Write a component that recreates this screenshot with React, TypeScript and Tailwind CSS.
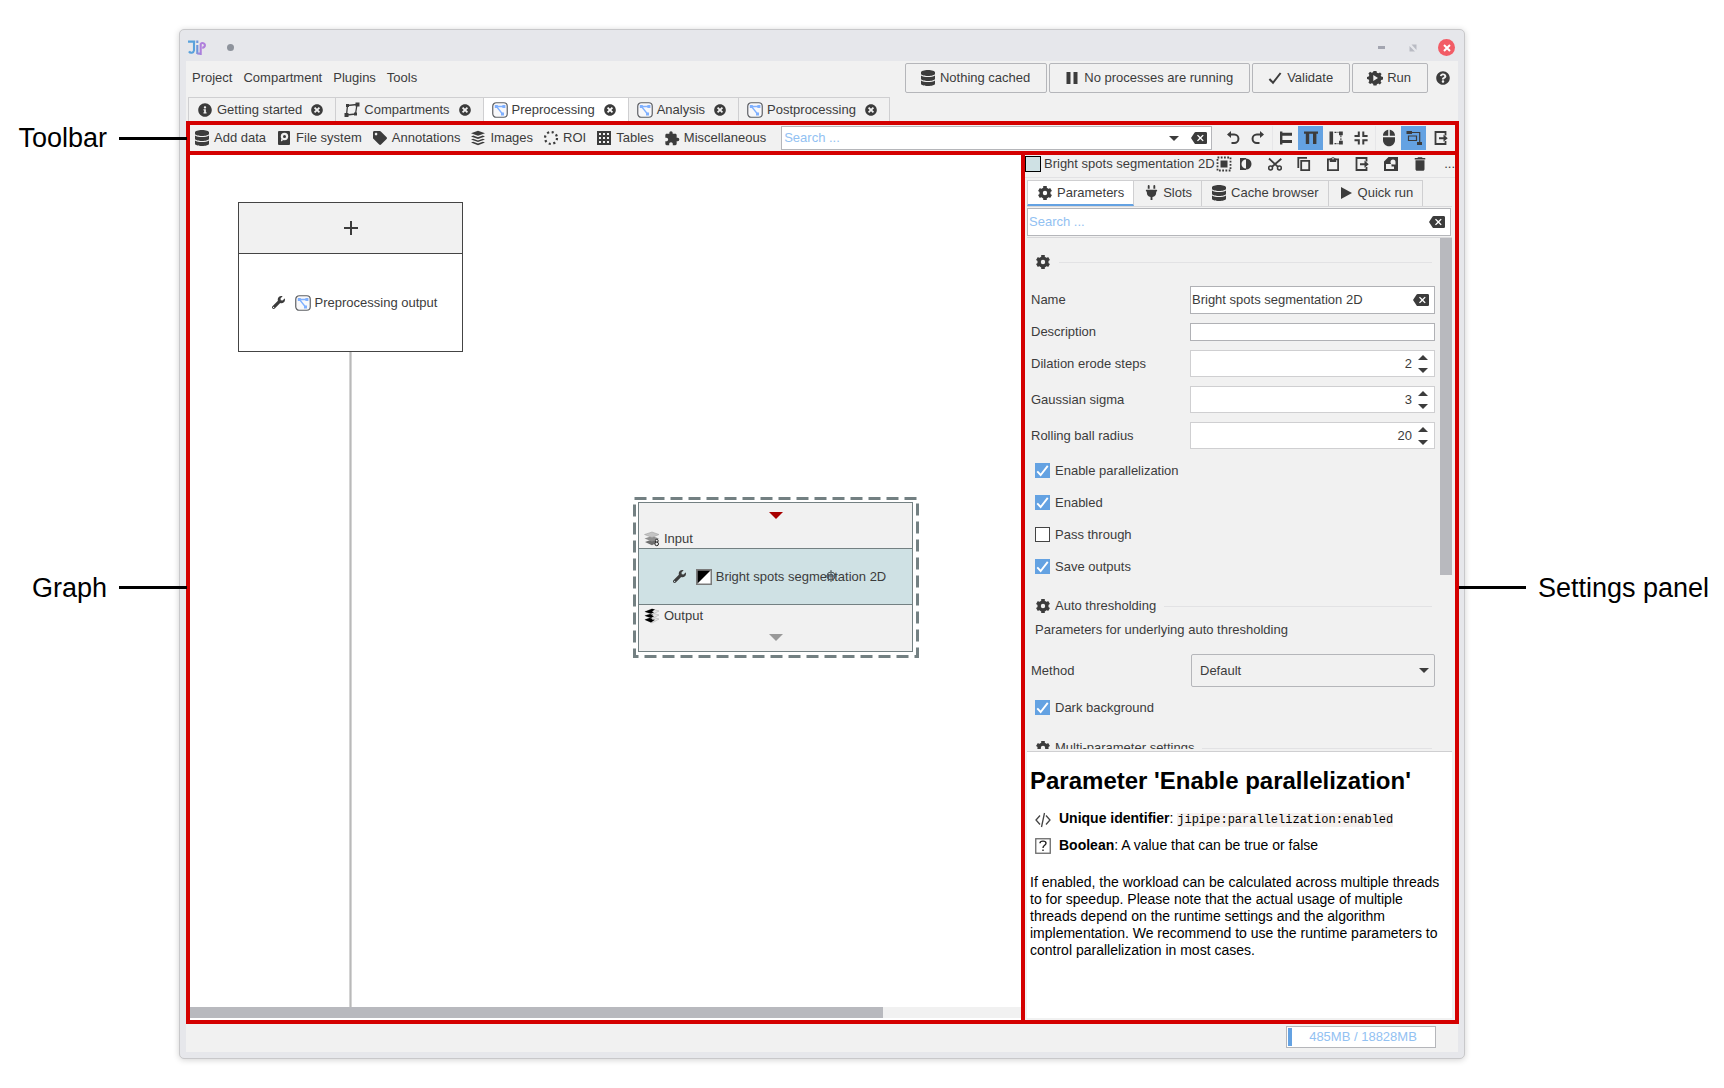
import React from "react";
import {
  FaDatabase,
  FaInfoCircle,
  FaPlug,
  FaQuestionCircle,
  FaTag,
  FaTimesCircle,
  FaWrench,
} from "react-icons/fa";
import { MdBackspace, MdDelete, MdExtension, MdMouse } from "react-icons/md";

type IconProps = { className?: string };

function Svg({ children, className = "size-4" }: { children: React.ReactNode; className?: string }) {
  return (
    <svg viewBox="0 0 16 16" className={`${className} shrink-0`} fill="currentColor" aria-hidden="true">
      {children}
    </svg>
  );
}

/* ---------- icons ---------- */

const Logo = () => (
  <svg viewBox="0 0 18 15" className="h-[15px] w-[18px]" fill="none" strokeWidth="2.1" aria-hidden="true">
    <path d="M0 1.6H7.2M6 1.6V10.4a2.7 2.7 0 0 1-5 1" stroke="#5aa2dc" />
    <path d="M9.3 5V14M9.3 0.5v2.6" stroke="#6f96dc" />
    <path d="M12.7 15V4a2.3 2.3 0 1 1 2.3 3.6H14.2" stroke="#b07fdc" />
    <path d="M9.3 13.6h3.4" stroke="#9a8adc" />
  </svg>
);

const CompartmentIcon = () => (
  <Svg>
    <rect x="0.75" y="0.75" width="14.5" height="14.5" rx="3.5" fill="#f8f8fa" stroke="#5e6064" strokeWidth="1.2" />
    <path d="M4 4.5h8M4.5 4.5l6 7.5" stroke="#7fb0ff" strokeWidth="1.3" />
    <rect x="2.8" y="3" width="3" height="3" fill="#7fb0ff" />
    <rect x="10.4" y="3" width="3" height="3" fill="#7fb0ff" />
    <rect x="9" y="10.5" width="3" height="3" fill="#7fb0ff" />
  </Svg>
);

const GraphIcon = () => (
  <Svg>
    <path d="M3.5 3.5L13 2.5M3.5 3.5L2.5 13M13 2.5L11.5 12M2.5 13l9-1" stroke="currentColor" strokeWidth="1.3" fill="none" />
    <path d="M2 2h3v3H2zM11.5 0.5H15.5V4.5H11.5zM0.5 11H4.5V15H0.5zM10 10.5h3v3h-3z" />
  </Svg>
);

const DriveIcon = () => (
  <Svg>
    <rect x="2" y="1" width="12" height="14" rx="1" />
    <circle cx="8.5" cy="6.5" r="3.7" fill="#f1f1f1" />
    <path d="M5 9v2.5L7.500 10z" fill="#f1f1f1" />
    <circle cx="8.5" cy="6.5" r="1.5" />
  </Svg>
);

const LayersIcon = () => (
  <Svg>
    <path d="M8 0.8l7 2.5-7 2.5-7-2.5z" />
    <path d="M1 6.4l2.200-.8L8 7.300l4.800-1.700 2.200.8-7 2.600z" />
    <path d="M1 9.500l2.200-.8L8 10.400l4.800-1.700 2.200.8-7 2.600z" />
    <path d="M1 12.600l2.200-.8L8 13.500l4.800-1.700 2.200.8-7 2.600z" />
  </Svg>
);

const RoiIcon = () => (
  <Svg>
    <circle cx="8" cy="8" r="6" fill="none" stroke="currentColor" strokeWidth="2.2" strokeDasharray="2.1 2.61" />
  </Svg>
);

const TableIcon = () => (
  <Svg>
    <path fillRule="evenodd" d="M1 1h14v14H1zM3 3v2h2V3zM7 3v2h2V3zM11 3v2h2V3zM3 7v2h2V7zM7 7v2h2V7zM11 7v2h2V7zM3 11v2h2v-2zM7 11v2h2v-2zM11 11v2h2v-2z" />
  </Svg>
);

const UndoIcon = () => (
  <Svg>
    <path d="M5 4.5h4.2a4.1 4.1 0 0 1 0 8.500H6.500" stroke="currentColor" strokeWidth="2" fill="none" />
    <path d="M6 1v7L2 4.500z" />
  </Svg>
);

const RedoIcon = () => (
  <Svg>
    <path d="M11 4.500H6.800a4.100 4.100 0 0 0 0 8.500H9.500" stroke="currentColor" strokeWidth="2" fill="none" />
    <path d="M10 1v7l4-3.500z" />
  </Svg>
);

const AlignLeftIcon = () => (
  <Svg>
    <path d="M2 1.500h2.400v1.300H14v3H4.400v4.100H14v3H4.400v1.600H2z" />
  </Svg>
);

const AlignTopIcon = () => (
  <Svg>
    <path d="M1 1.500h14v2.300h-1.600V14H10V3.800H6.200V14H2.800V3.800H1z" />
  </Svg>
);

const AutoLayoutIcon = () => (
  <Svg>
    <path d="M1.500 1.500h3.600v13H1.500zM11 1.500h3.800v3.800H11zM11 10.700h3.800v3.800H11z" />
    <path d="M6.500 2.400h4M6.500 13.600h4M12.900 5.300v5.400" stroke="currentColor" strokeWidth="1.1" strokeDasharray="2 1" fill="none" />
  </Svg>
);

const CenterViewIcon = () => (
  <Svg>
    <path d="M4.800 1.500h2V7H1.500V5h3.300zM9.300 1.500h2V5h3.300v2H9.300zM1.500 9.200h5.300v5.400h-2v-3.400H1.500zM9.300 9.200h5.300v2h-3.300v3.400h-2z" />
  </Svg>
);

const EdgeLayoutIcon = () => (
  <Svg>
    <path d="M5 2.500h8.700v10.500M2.500 6h8v4.500h-8z" stroke="currentColor" strokeWidth="1.2" fill="none" />
    <path d="M0.500 1H6v3H0.500zM11 12h5v3h-5z" />
  </Svg>
);

const ExportIcon = () => (
  <Svg>
    <path d="M12.500 5.500V2h-10v12h10V11" stroke="currentColor" strokeWidth="1.800" fill="none" />
    <path d="M6 7.200h4.500V4.600l4.200 3.600-4.200 3.600V9.200H6z" />
  </Svg>
);

const PauseIcon = () => (
  <Svg>
    <path d="M2.500 2h4v12h-4zM9.500 2h4v12h-4z" />
  </Svg>
);

const PlayIcon = () => (
  <Svg>
    <path d="M3 2l11 6-11 6z" />
  </Svg>
);

const TickIcon = ({ className = "size-4" }: IconProps) => (
  <Svg className={className}>
    <path d="M2.400 9l3.600 3.800L13.600 3" stroke="currentColor" strokeWidth="2" fill="none" />
  </Svg>
);

const GearIcon = () => (
  <Svg>
    <circle cx="8" cy="8" r="3.900" fill="none" stroke="currentColor" strokeWidth="3.400" />
    <path
      d="M8 1v3M8 12v3M1.940 4.500l2.600 1.500M11.460 10l2.600 1.500M1.940 11.500l2.600-1.500M11.460 6l2.600-1.500"
      stroke="currentColor"
      strokeWidth="3.600"
      fill="none"
    />
  </Svg>
);

const RunIcon = () => (
  <Svg>
    <path
      fillRule="evenodd"
      d="M6.500 1h3l.4 1.700 1.500.6 1.600-.9L14.600 4l-.9 1.600.5 1L16 7v2.400l-1.800.5-.6 1.400.9 1.500-1.700 1.700-1.500-.9-1.400.6L9.500 15.500h-3L6 13.800l-1.400-.6-1.500.9-1.700-1.700.9-1.500L1.700 9.500 0 9V7l1.700-.5.6-1.400L1.400 3.500 3.100 1.800l1.500.9L6 2.200zM6.300 5v6L11 8z"
    />
  </Svg>
);

const SelectAllIcon = () => (
  <Svg>
    <rect x="1.500" y="1.500" width="13" height="13" fill="none" stroke="currentColor" strokeWidth="1.800" strokeDasharray="1.800 1.450" />
    <rect x="4.500" y="4.500" width="7" height="7" />
  </Svg>
);

const InvertIcon = () => (
  <Svg>
    <path d="M2 2h6v1.500a4.500 4.500 0 0 0 0 9V14H2z" />
    <path d="M8 2.500a5.500 5.500 0 0 1 0 11z" />
  </Svg>
);

const CutIcon = () => (
  <Svg>
    <path d="M2 2.500l9 8.300M14.300 2.800L5 10.800" stroke="currentColor" strokeWidth="1.800" fill="none" />
    <circle cx="3.600" cy="12" r="1.900" fill="none" stroke="currentColor" strokeWidth="1.500" />
    <circle cx="12.400" cy="12" r="1.900" fill="none" stroke="currentColor" strokeWidth="1.500" />
  </Svg>
);

const CopyIcon = () => (
  <Svg>
    <path d="M2.300 12V1.900H11M5.200 4.900h8v9.200h-8z" stroke="currentColor" strokeWidth="1.800" fill="none" />
  </Svg>
);

const PasteIcon = () => (
  <Svg>
    <path d="M2.900 3.400h10.200v10.700H2.900z" stroke="currentColor" strokeWidth="1.800" fill="none" />
    <path d="M4.800 2.500h1.400a1.900 1.900 0 0 1 3.600 0h1.400V6H4.800z" />
    <circle cx="8" cy="2.800" r="0.800" fill="#f1f1f1" />
  </Svg>
);

const TemplateIcon = () => (
  <Svg>
    <path fillRule="evenodd" d="M5.500 1H15v14H1V5.500zM3 8v5h8v-2.500H8.500V8zM10 3.500a2.500 2.500 0 1 0 0 5h2.500V6A2.500 2.500 0 0 0 10 3.500z" />
  </Svg>
);

const CodeIcon = () => (
  <Svg>
    <path d="M5 3.500L1 8l4 4.500M11 3.500L15 8l-4 4.500M9.500 1l-3 14" stroke="#444" strokeWidth="1.300" fill="none" />
  </Svg>
);

const UnknownTypeIcon = () => (
  <Svg>
    <rect x="0.750" y="0.750" width="14.500" height="14.500" fill="none" stroke="#6a6a6a" strokeWidth="1.300" />
    <path d="M5 5.300C5 2.400 11 2.400 11 5.300 11 7.400 8 7.300 8 10M8 11.500v1.600" stroke="#222" strokeWidth="1.400" fill="none" />
  </Svg>
);

const GreyscaleStackIcon = () => (
  <Svg>
    <path d="M1 11l7-2.500 6 2.500-6 3.200z" fill="#6f6f6f" />
    <path d="M0.500 7.500L8 5l7 2.500-7 3z" fill="#8f8f8f" />
    <path d="M0.500 3.500L8 1l7 2.500-7 3z" fill="#c4c4c4" stroke="#9a9a9a" strokeWidth="0.500" />
    <circle cx="12.700" cy="9.800" r="1.500" fill="#eee" stroke="#222" strokeWidth="1" />
    <circle cx="12.700" cy="12.900" r="1.800" fill="#eee" stroke="#222" strokeWidth="1" />
  </Svg>
);

const MaskStackIcon = () => (
  <Svg>
    <path d="M1 11.500L8 9l7 2-7 4z" fill="#e4e4e4" stroke="#aaa" strokeWidth="0.500" />
    <path d="M0.500 11.800L8 9v2.500l3 .3L7 14.500z" fill="#000" />
    <path d="M1 7.500L8 5l7 2-7 3.500z" fill="#e4e4e4" stroke="#aaa" strokeWidth="0.500" />
    <path d="M0.500 7.800L10 4.800 8 7.200l2 1L7 10z" fill="#000" />
    <path d="M1 3.500L8 1l7 2-7 3.500z" fill="#e4e4e4" stroke="#aaa" strokeWidth="0.500" />
    <path d="M0.500 3.700L8 0.800l3 .6-3 2 2 .8L7 5.800z" fill="#000" />
  </Svg>
);

const ThresholdIcon = () => (
  <Svg>
    <rect x="0.750" y="0.750" width="14.500" height="14.500" fill="#fff" stroke="#7a7a7a" strokeWidth="1.500" />
    <path d="M1.500 1.500h13l-13 13z" fill="#000" />
  </Svg>
);

const CrosshairIcon = () => (
  <svg viewBox="0 0 12 12" className="size-3" fill="none" stroke="#4a5558" aria-hidden="true">
    <circle cx="6" cy="6" r="4" />
    <path d="M6 0v12M0 6h12" />
  </svg>
);

const CaretDown = ({ className }: IconProps) => (
  <svg viewBox="0 0 10 5" preserveAspectRatio="none" className={className} fill="currentColor" aria-hidden="true">
    <path d="M0 0h10L5 5z" />
  </svg>
);

const CaretUp = ({ className }: IconProps) => (
  <svg viewBox="0 0 10 5" preserveAspectRatio="none" className={className} fill="currentColor" aria-hidden="true">
    <path d="M0 5h10L5 0z" />
  </svg>
);

const Wrench = () => <FaWrench className="size-[13px] shrink-0" />;

/* ---------- window chrome ---------- */

function TitleBar() {
  return (
    <header className="flex h-[31px] shrink-0 items-center pt-1 pr-[3px] pl-0.5">
      <Logo />
      <span className="ml-[21px] size-[7px] rounded-full bg-[#8e939c]" />
      <div className="ml-auto flex items-center">
        <button aria-label="Minimize" className="flex size-4 items-center justify-center">
          <span className="h-[3px] w-[7px] bg-[#a3a5b0]" />
        </button>
        <button aria-label="Maximize" className="ml-4 flex size-4 items-center justify-center text-[#b9bbc3]">
          <svg viewBox="0 0 8 8" className="size-2" fill="currentColor" aria-hidden="true">
            <path d="M2.500 0.500h5V6zM0.500 2v5.500H6z" />
          </svg>
        </button>
        <button aria-label="Close" className="ml-[17px] flex size-[17px] items-center justify-center rounded-full bg-[#f25c66] text-white">
          <svg viewBox="0 0 8 8" className="size-2" stroke="currentColor" strokeWidth="2" aria-hidden="true">
            <path d="M1 1l6 6M7 1L1 7" />
          </svg>
        </button>
      </div>
    </header>
  );
}

function ActionButton({ icon, children }: { icon: React.ReactNode; children: React.ReactNode }) {
  return (
    <button className="flex h-[30px] items-center gap-1 rounded-[2px] border border-[#b5b6ba] pr-4 pl-3.5">
      {icon}
      {children}
    </button>
  );
}

function MenuBar() {
  return (
    <div className="flex h-[36px] shrink-0 items-start justify-between pt-0.5 pr-2 pl-1.5">
      <nav className="flex h-[30px] items-center gap-[11px]">
        <button>Project</button>
        <button>Compartment</button>
        <button>Plugins</button>
        <button>Tools</button>
      </nav>
      <div className="flex items-center gap-0.5">
        <ActionButton icon={<FaDatabase className="size-4" />}>Nothing cached</ActionButton>
        <ActionButton icon={<PauseIcon />}>No processes are running</ActionButton>
        <ActionButton icon={<TickIcon />}>Validate</ActionButton>
        <ActionButton icon={<RunIcon />}>Run</ActionButton>
        <button aria-label="Help" className="ml-1.5">
          <FaQuestionCircle className="size-[14px]" />
        </button>
      </div>
    </div>
  );
}

const documentTabs = [
  { label: "Getting started", icon: <FaInfoCircle className="size-[14px]" /> },
  { label: "Compartments", icon: <GraphIcon /> },
  { label: "Preprocessing", icon: <CompartmentIcon />, active: true },
  { label: "Analysis", icon: <CompartmentIcon /> },
  { label: "Postprocessing", icon: <CompartmentIcon /> },
];

function DocumentTabs() {
  return (
    <div className="flex h-6 shrink-0 pl-0.5">
      {documentTabs.map((tab, i) => (
        <div
          key={tab.label}
          className={`flex items-center border-t border-r border-[#cfcfd1] pr-3 pl-2 ${i === 0 ? "border-l" : ""} ${
            tab.active ? "bg-white" : ""
          }`}
        >
          <button className="flex items-center gap-1">
            <span className="flex w-4 justify-center">{tab.icon}</span>
            {tab.label}
          </button>
          <button aria-label={`Close ${tab.label}`} className="ml-[9px]">
            <FaTimesCircle className="size-3" />
          </button>
        </div>
      ))}
    </div>
  );
}

/* ---------- toolbar ---------- */

const toolbarMenus = [
  { label: "Add data", icon: <FaDatabase className="size-4" /> },
  { label: "File system", icon: <DriveIcon /> },
  { label: "Annotations", icon: <FaTag className="size-[14px]" /> },
  { label: "Images", icon: <LayersIcon /> },
  { label: "ROI", icon: <RoiIcon /> },
  { label: "Tables", icon: <TableIcon /> },
  { label: "Miscellaneous", icon: <MdExtension className="size-[17px]" /> },
];

const toolGroups = [
  [
    { label: "Undo", icon: <UndoIcon /> },
    { label: "Redo", icon: <RedoIcon /> },
  ],
  [
    { label: "Horizontal layout", icon: <AlignLeftIcon /> },
    { label: "Vertical layout", icon: <AlignTopIcon />, active: true },
    { label: "Auto layout", icon: <AutoLayoutIcon /> },
    { label: "Center view", icon: <CenterViewIcon /> },
  ],
  [
    { label: "Mouse help", icon: <MdMouse className="size-[18px]" /> },
    { label: "Draw edges", icon: <EdgeLayoutIcon />, active: true },
  ],
  [{ label: "Export", icon: <ExportIcon /> }],
];

function Toolbar() {
  return (
    <div className="flex h-[34px] shrink-0 items-center border-4 border-[#d40000] bg-[#f1f1f1] pr-0.5 pl-1">
      <div className="flex items-center gap-2.5">
        {toolbarMenus.map((m) => (
          <button key={m.label} className="flex items-center gap-1">
            <span className="flex w-4 justify-center">{m.icon}</span>
            {m.label}
          </button>
        ))}
      </div>
      <div className="ml-[15px] flex h-6 min-w-0 flex-1 items-center border border-[#b5b6ba] bg-white pr-1 pl-0.5">
        <input
          aria-label="Search nodes"
          placeholder="Search ..."
          className="min-w-0 flex-1 bg-transparent outline-none placeholder:text-[#92c1f2]"
        />
        <button aria-label="Show suggestions" className="px-3">
          <CaretDown className="h-[5px] w-[10px]" />
        </button>
        <button aria-label="Clear search">
          <MdBackspace className="size-4" />
        </button>
      </div>
      <div className="ml-2 flex gap-0.5">
        {toolGroups.map((group, g) => (
          <div key={g} className={`flex ${g === 1 || g === 2 ? "border-l border-[#e6e6e8]" : ""}`}>
            {group.map((t) => (
              <button
                key={t.label}
                aria-label={t.label}
                className={`flex h-6 w-[25px] items-center justify-center ${"active" in t && t.active ? "bg-[#64a2e2]" : ""}`}
              >
                {t.icon}
              </button>
            ))}
          </div>
        ))}
      </div>
    </div>
  );
}

/* ---------- graph ---------- */

function GraphCanvas() {
  return (
    <main className="flex min-w-0 flex-1 flex-col border-b-4 border-l-4 border-[#d40000] bg-white">
      <div className="relative flex-1 overflow-hidden">
        <div className="absolute top-[197px] bottom-0 left-[159px] w-[3px] border-x border-[#d4d4d4] bg-[#b9b9b9]" />

        <section className="absolute top-[47px] left-[48px] flex h-[150px] w-[225px] flex-col border border-[#444] bg-white">
          <button aria-label="Add slot" className="flex h-[51px] items-center justify-center border-b border-[#444] bg-[#f1f1f1]">
            <svg viewBox="0 0 14 14" className="size-[14px]" stroke="currentColor" strokeWidth="2" aria-hidden="true">
              <path d="M7 0v14M0 7h14" />
            </svg>
          </button>
          <div className="flex flex-1 items-center justify-center gap-1 pl-2">
            <Wrench />
            <span className="ml-1.5">
              <CompartmentIcon />
            </span>
            Preprocessing output
          </div>
        </section>

        <section className="absolute top-[342px] left-[443px] h-[161px] w-[286px] p-[5px]">
          <svg className="absolute inset-0 size-full" fill="none" aria-hidden="true">
            <rect x="1.5" y="1.5" width="283" height="158" stroke="#738082" strokeWidth="3" strokeDasharray="12 6" />
          </svg>
          <div className="relative flex h-[150px] w-[275px] flex-col border border-[#738082] bg-[#f1f1f1]">
            <div className="flex h-[45px] flex-col justify-between pb-px">
              <CaretDown className="mx-auto mt-[9px] h-[7px] w-[14px] text-[#a80000]" />
              <div className="flex items-center gap-1 pl-[5px]">
                <GreyscaleStackIcon />
                Input
              </div>
            </div>
            <div className="relative flex h-[57px] items-center justify-center gap-1 border-y border-[#738082] bg-[#cfe1e4] pl-2">
              <Wrench />
              <span className="ml-1.5">
                <ThresholdIcon />
              </span>
              Bright spots segmentation 2D
              <span className="absolute top-[21px] left-[186px]">
                <CrosshairIcon />
              </span>
            </div>
            <div className="flex items-center gap-1 pt-[3px] pl-[5px]">
              <MaskStackIcon />
              Output
            </div>
            <CaretDown className="mx-auto mt-2.5 h-[7px] w-[14px] text-[#999]" />
          </div>
        </section>
      </div>
      <div className="mb-0.5 flex h-[11px] shrink-0 bg-[#f1f1f1]">
        <div className="w-5/6 bg-[#b8b9be]" />
      </div>
    </main>
  );
}

/* ---------- settings ---------- */

const nodeActions = [
  { label: "Invert selection", icon: <InvertIcon /> },
  { label: "Cut", icon: <CutIcon /> },
  { label: "Copy", icon: <CopyIcon /> },
  { label: "Paste", icon: <PasteIcon /> },
  { label: "Export", icon: <ExportIcon /> },
  { label: "Create template", icon: <TemplateIcon /> },
  { label: "Delete", icon: <MdDelete className="size-[18px]" /> },
];

const settingsTabs = [
  { label: "Parameters", icon: <GearIcon />, active: true },
  { label: "Slots", icon: <FaPlug className="size-[15px]" /> },
  { label: "Cache browser", icon: <FaDatabase className="size-4" /> },
  { label: "Quick run", icon: <PlayIcon /> },
];

function SectionHeading({ title }: { title?: string }) {
  return (
    <div className="flex h-4 shrink-0 items-center pr-[3px] pl-1">
      <GearIcon />
      {title && <h3 className="ml-1">{title}</h3>}
      <span className="ml-2 h-px flex-1 bg-[#e2e2e4]" />
    </div>
  );
}

function Field({ id, label, children }: { id: string; label: string; children: React.ReactNode }) {
  return (
    <div className="flex items-center">
      <label htmlFor={id} className="w-[159px] shrink-0">
        {label}
      </label>
      {children}
    </div>
  );
}

function NumberField({ id, label, value }: { id: string; label: string; value: string }) {
  return (
    <Field id={id} label={label}>
      <div className="flex h-[27px] min-w-0 flex-1 items-center border border-[#cfcfd1] bg-white pr-1.5">
        <input id={id} defaultValue={value} className="min-w-0 flex-1 bg-transparent text-right outline-none" />
        <div className="ml-1.5 flex flex-col gap-2">
          <button type="button" aria-label={`Increase ${label}`}>
            <CaretUp className="h-[5px] w-[10px]" />
          </button>
          <button type="button" aria-label={`Decrease ${label}`}>
            <CaretDown className="h-[5px] w-[10px]" />
          </button>
        </div>
      </div>
    </Field>
  );
}

function CheckField({ label, checked }: { label: string; checked?: boolean }) {
  return (
    <label className="flex h-[15px] items-center gap-[5px] pl-1">
      <span className="relative size-[15px]">
        <input
          type="checkbox"
          defaultChecked={checked}
          className="peer block size-[15px] appearance-none border border-[#444] bg-white checked:border-[#64a2e2] checked:bg-[#64a2e2]"
        />
        <span className="pointer-events-none absolute inset-0 hidden text-white peer-checked:block">
          <TickIcon className="size-[15px]" />
        </span>
      </span>
      {label}
    </label>
  );
}

function ParameterForm() {
  return (
    <div className="flex min-h-0 flex-1 border-t border-[#d8d8da]">
      <form className="flex min-w-0 flex-1 flex-col overflow-hidden pt-4 pr-[5px] pl-1">
        <SectionHeading />
        <div className="mt-4">
          <Field id="name" label="Name">
            <div className="flex h-[28px] min-w-0 flex-1 items-center border border-[#b0b1b5] bg-white pr-[5px] pl-px">
              <input id="name" defaultValue="Bright spots segmentation 2D" className="min-w-0 flex-1 bg-transparent outline-none" />
              <button type="button" aria-label="Clear name">
                <MdBackspace className="size-4" />
              </button>
            </div>
          </Field>
        </div>
        <div className="mt-[9px] flex flex-col gap-[9px]">
          <Field id="description" label="Description">
            <input id="description" className="h-[18px] min-w-0 flex-1 border border-[#b0b1b5] bg-white outline-none" />
          </Field>
          <NumberField id="dilation" label="Dilation erode steps" value="2" />
          <NumberField id="sigma" label="Gaussian sigma" value="3" />
          <NumberField id="radius" label="Rolling ball radius" value="20" />
        </div>
        <div className="mt-[14px] flex flex-col gap-[17px]">
          <CheckField label="Enable parallelization" checked />
          <CheckField label="Enabled" checked />
          <CheckField label="Pass through" />
          <CheckField label="Save outputs" checked />
        </div>
        <div className="mt-6">
          <SectionHeading title="Auto thresholding" />
        </div>
        <p className="mt-2 pl-1">Parameters for underlying auto thresholding</p>
        <div className="mt-4">
          <Field id="method" label="Method">
            <div className="relative ml-px flex-1">
              <select
                id="method"
                className="block h-[33px] w-full appearance-none rounded-[2px] border border-[#b5b6ba] bg-[#f1f1f1] px-2 outline-none"
              >
                <option>Default</option>
              </select>
              <CaretDown className="pointer-events-none absolute top-[14px] right-[6px] h-[5px] w-[10px]" />
            </div>
          </Field>
        </div>
        <div className="mt-[13px]">
          <CheckField label="Dark background" checked />
        </div>
        <div className="mt-[25px]">
          <SectionHeading title="Multi-parameter settings" />
        </div>
      </form>
      <div className="w-3 shrink-0">
        <div className="h-[66%] bg-[#b8b9be]" />
      </div>
    </div>
  );
}

function ParameterHelp() {
  return (
    <article className="my-0.5 h-[267px] shrink-0 overflow-hidden border-t border-[#cfcfd1] bg-white px-[3px] pt-[14px] text-[14px] leading-[17px] text-black">
      <h2 className="text-[24px] leading-[30px] font-bold">Parameter 'Enable parallelization'</h2>
      <div className="mt-[14px] flex flex-col gap-2 pl-[5px]">
        <div className="flex items-center gap-2">
          <CodeIcon />
          <p>
            <b>Unique identifier</b>: <code className="bg-[#f5f0ee] font-['Liberation_Mono',monospace] text-[12px]">jipipe:parallelization:enabled</code>
          </p>
        </div>
        <div className="flex items-center gap-2">
          <UnknownTypeIcon />
          <p>
            <b>Boolean</b>: A value that can be true or false
          </p>
        </div>
      </div>
      <p className="mt-5">
        If enabled, the workload can be calculated across multiple threads to for speedup. Please note that the actual usage of multiple
        threads depend on the runtime settings and the algorithm implementation. We recommend to use the runtime parameters to control
        parallelization in most cases.
      </p>
    </article>
  );
}

function SettingsPanel() {
  return (
    <aside className="flex w-[438px] shrink-0 flex-col border-x-4 border-b-4 border-[#d40000] bg-[#f1f1f1]">
      <div className="flex h-[23px] shrink-0 items-center border-b border-[#e2e2e4] pb-1">
        <span className="size-4 shrink-0 border border-black bg-[#cfe1e4]" />
        <span className="mr-px ml-[3px] whitespace-nowrap">Bright spots segmentation 2D</span>
        <button aria-label="Select all">
          <SelectAllIcon />
        </button>
        <div className="flex">
          {nodeActions.map((a) => (
            <button key={a.label} aria-label={a.label} className="flex w-[29px] items-center justify-center">
              {a.icon}
            </button>
          ))}
        </div>
        <button aria-label="More" className="ml-auto">
          ...
        </button>
      </div>
      <div className="flex min-h-0 flex-1 flex-col pr-[3px] pl-0.5">
        <div className="mt-0.5 flex h-[27px] shrink-0 border-b border-[#d8d8da]">
          {settingsTabs.map((t) => (
            <button
              key={t.label}
              className={`flex items-center gap-1 border-t border-r px-[9px] ${
                t.active ? "border-b-2 border-l border-[#cfcfd1] border-b-[#64a2e2] bg-white" : "border-[#cfcfd1] pb-0.5"
              }`}
            >
              <span className="flex w-4 justify-center">{t.icon}</span>
              {t.label}
            </button>
          ))}
        </div>
        <div className="my-px mr-px flex h-[28px] shrink-0 items-center border border-[#b5b6ba] bg-white pr-[5px] pl-px">
          <input aria-label="Search parameters" placeholder="Search ..." className="min-w-0 flex-1 bg-transparent outline-none placeholder:text-[#92c1f2]" />
          <button aria-label="Clear search">
            <MdBackspace className="size-4" />
          </button>
        </div>
        <ParameterForm />
        <ParameterHelp />
      </div>
    </aside>
  );
}

/* ---------- status bar ---------- */

function StatusBar() {
  return (
    <footer className="flex h-7 shrink-0 items-start justify-end pt-0.5 pr-[22px]">
      <div className="flex h-[22px] w-[150px] items-center border border-[#b5b6ba] bg-white p-px text-[#92c1f2]">
        <span className="h-[18px] w-1 bg-[#64a2e2]" />
        <span className="flex-1 text-center">485MB / 18828MB</span>
      </div>
    </footer>
  );
}

/* ---------- callouts ---------- */

function Callout({ children, side }: { children: string; side: "left" | "right" }) {
  return side === "left" ? (
    <div className="relative z-10 -mr-2 flex items-center justify-end gap-3">
      <span>{children}</span>
      <span className="h-[3px] w-[68px] bg-black" />
    </div>
  ) : (
    <div className="relative z-10 -ml-1.5 flex items-center gap-3">
      <span className="h-[3px] w-[67px] bg-black" />
      <span>{children}</span>
    </div>
  );
}

export default function App() {
  return (
    <div className="flex h-screen min-h-[900px] min-w-[1500px] bg-white font-['Liberation_Sans',Arial,sans-serif] text-[13px] leading-4 text-[#3c3c3c]">
      <div className="flex w-[179px] shrink-0 flex-col text-[27px] leading-[34px] text-black">
        <div className="pt-[121px]">
          <Callout side="left">Toolbar</Callout>
        </div>
        <div className="mb-[68px] flex flex-1 flex-col justify-center">
          <Callout side="left">Graph</Callout>
        </div>
      </div>

      <div className="mt-[29px] mb-[29px] flex min-w-0 flex-1 flex-col rounded-[5px] border border-[#c8c8ca] bg-[#e6e7eb] px-1.5 pb-1.5 shadow-[0_1px_6px_rgba(0,0,0,0.18)]">
        <TitleBar />
        <div className="flex min-h-0 flex-1 flex-col bg-[#f1f1f1]">
          <MenuBar />
          <DocumentTabs />
          <div className="-mr-px flex min-h-0 flex-1 flex-col">
            <Toolbar />
            <div className="flex min-h-0 flex-1">
              <GraphCanvas />
              <SettingsPanel />
            </div>
          </div>
          <StatusBar />
        </div>
      </div>

      <div className="flex w-[259px] shrink-0 flex-col pt-[155px] pb-[68px] text-[27px] leading-[34px] text-black">
        <div className="flex flex-1 flex-col justify-center">
          <Callout side="right">Settings panel</Callout>
        </div>
      </div>
    </div>
  );
}
